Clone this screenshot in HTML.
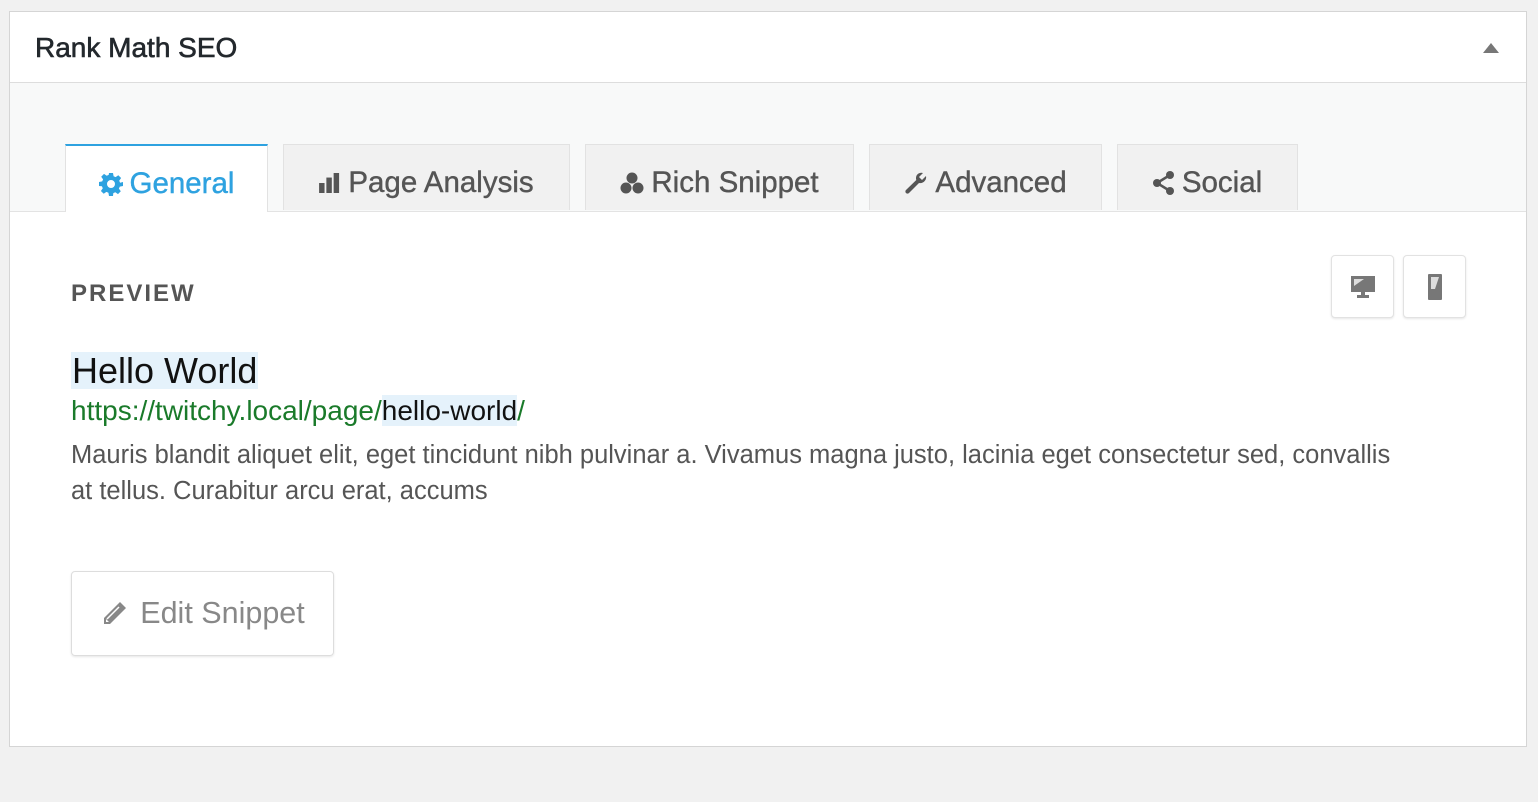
<!DOCTYPE html>
<html><head><style>
body{margin:0;background:#f1f1f1;width:1538px;height:802px;font-family:"Liberation Sans",sans-serif;position:relative;overflow:hidden}
.box{position:absolute;left:9px;top:11px;width:1516px;height:734px;border:1px solid #d5d5d5;background:#fff}
.hd{height:70px;border-bottom:1px solid #ddd;position:relative}
.hd h2{margin:0;position:absolute;left:25px;top:20px;font-size:28px;font-weight:normal;color:#23282d;-webkit-text-stroke:.6px #23282d}
.tri{position:absolute;right:27px;top:31px;width:0;height:0;border-left:8px solid transparent;border-right:8px solid transparent;border-bottom:10px solid #777}
.tabs{height:128px;background:#f8f9f9;border-bottom:1px solid #e3e3e3;position:relative}
.tab{position:absolute;top:61px;height:66px;background:#f1f1f1;border:1px solid #e2e2e2;border-bottom:none;box-sizing:border-box;font-size:29.5px;color:#555;-webkit-text-stroke:.4px #555;display:flex;align-items:center;justify-content:center;gap:7px;padding-top:10px}
.tab.act{background:#fff;border-top:2px solid #2ea2e0;color:#2ea2e0;-webkit-text-stroke:.4px #2ea2e0;height:68px}
.tab svg{fill:currentColor}
.pv{position:absolute;left:61px;top:268px;font-size:24px;font-weight:bold;letter-spacing:2px;color:#555}
.dv{position:absolute;top:243px;width:63px;height:63px;border:1px solid #e2e2e2;border-radius:4px;box-shadow:0 1px 2px rgba(0,0,0,.1);box-sizing:border-box;display:flex;align-items:center;justify-content:center;background:#fff}
.t{position:absolute;left:61px;top:340px;font-size:36px;color:#111;background:#e5f2fb;padding:0 1px;line-height:37px}
.u{position:absolute;left:61px;top:383px;font-size:28px;color:#1a7a2a}
.u span{color:#111;background:#e5f2fb}
.d{position:absolute;left:61px;top:425px;width:1400px;font-size:25.5px;line-height:36px;color:#555}
.ed{position:absolute;left:61px;top:559px;width:263px;height:85px;border:1px solid #ddd;border-radius:4px;box-shadow:0 1px 2px rgba(0,0,0,.1);box-sizing:border-box;display:flex;align-items:center;justify-content:center;gap:12px;font-size:30.5px;color:#888}
</style></head><body>
<div class="box">
<div class="hd"><h2>Rank Math SEO</h2><div class="tri"></div></div>
<div class="tabs">
<div class="tab act" style="left:55px;width:203px"><svg width="24" height="24" viewBox="0 0 24 24"><path d="M10 1h4l.6 3.2 2 .9 2.7-1.9 2.8 2.8-1.9 2.7.9 2L24 10v4l-3.2.6-.9 2 1.9 2.7-2.8 2.8-2.7-1.9-2 .9L14 24h-4l-.6-3.2-2-.9-2.7 1.9-2.8-2.8 1.9-2.7-.9-2L0 14v-4l3.2-.6.9-2L2.2 4.7 5 1.9l2.7 1.9 2-.9zM12 8a4 4 0 100 8 4 4 0 000-8z"/></svg>General</div>
<div class="tab" style="left:273px;width:287px"><svg width="22" height="20" viewBox="0 0 24 22"><rect x="0" y="11" width="6" height="11"/><rect x="8" y="5" width="6" height="17"/><rect x="16" y="0" width="6" height="22"/></svg>Page Analysis</div>
<div class="tab" style="left:575px;width:269px"><svg width="24" height="22" viewBox="0 0 24 22"><circle cx="12" cy="6" r="5.5"/><circle cx="6" cy="16" r="5.5"/><circle cx="18" cy="16" r="5.5"/></svg>Rich Snippet</div>
<div class="tab" style="left:859px;width:233px"><svg width="24" height="24" viewBox="0 0 24 24"><path d="M22 5l-4 4-3-3 4-4c-3-1-7 1-7 5 0 1 0 1 .3 2L2 19a2.1 2.1 0 003 3l10-10c4 1 8-3 7-7z"/></svg>Advanced</div>
<div class="tab" style="left:1107px;width:181px"><svg width="22" height="24" viewBox="0 0 22 24"><circle cx="17" cy="4" r="4"/><circle cx="4" cy="12" r="4"/><circle cx="17" cy="20" r="4"/><path d="M17 4L4 12l13 8" stroke="#555" stroke-width="2.5" fill="none"/></svg>Social</div>
</div>
<div class="pv">PREVIEW</div>
<div class="dv" style="left:1321px"><svg width="24" height="24" viewBox="0 0 24 24"><rect x="0" y="1" width="24" height="16" fill="#777"/><path d="M3 4h10l-10 7z" fill="#ddd"/><rect x="10" y="17" width="4" height="4" fill="#777"/><rect x="6" y="20" width="12" height="3" fill="#777"/></svg></div>
<div class="dv" style="left:1393px"><svg width="14" height="26" viewBox="0 0 14 26"><rect x="0" y="0" width="14" height="26" rx="1" fill="#777"/><path d="M3 3h8L7 15H3z" fill="#ddd"/></svg></div>
<div class="t">Hello World</div>
<div class="u">https://twitchy.local/page/<span>hello-world</span>/</div>
<div class="d">Mauris blandit aliquet elit, eget tincidunt nibh pulvinar a. Vivamus magna justo, lacinia eget consectetur sed, convallis<br>at tellus. Curabitur arcu erat, accums</div>
<div class="ed"><svg width="28" height="28" viewBox="0 0 28 28"><path d="M20 2l6 6L10 24H4v-6zM6 19v3h3" fill="#888"/><path d="M7 19l12-12" stroke="#fff" stroke-width="1.5"/></svg>Edit Snippet</div>
</div>
</body></html>
